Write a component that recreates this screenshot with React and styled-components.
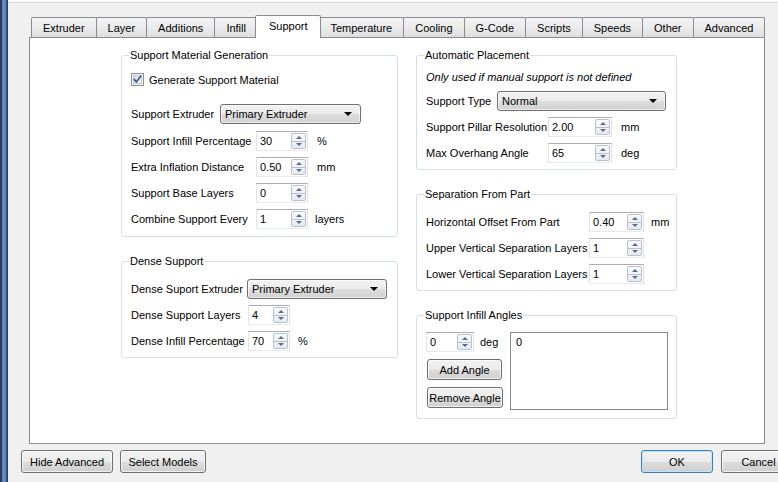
import styled, { createGlobalStyle } from 'styled-components';

const GlobalStyle = createGlobalStyle`
  html, body { margin: 0; padding: 0; background: #f0f0f0; }
  body {
    font-family: "Liberation Sans", Arial, sans-serif;
    font-size: 11px;
    color: #000;
  }
  #root { width: 778px; height: 482px; overflow: hidden; }
`;

const Window = styled.div`
  display: flex;
  width: 778px;
  height: 482px;
  background: #f0f0f0;
  overflow: hidden;
`;

const FrameEdge = styled.div`
  flex: none;
  width: 8px;
  background: linear-gradient(to right, #2a3d5e 0, #2a3d5e 2px, #5a7fbd 2px, #6d91cb 5px, #3f63a0 6px, #1d3357 8px);
`;

const Dialog = styled.div`
  flex: none;
  width: 788px;
  box-sizing: border-box;
  padding: 15px 0 0 13px;
  display: flex;
  flex-direction: column;
  background: linear-gradient(#fbfbfb 0, #fbfbfb 2px, #dadada 2px, #dadada 3px, #f0f0f0 3px);
`;

const TabWidget = styled.div`
  margin-left: 8px;
  width: 736px;
  display: flex;
  flex-direction: column;
`;

const TabBar = styled.div`
  position: relative;
  z-index: 1;
  display: flex;
  align-items: flex-end;
  height: 23px;
  padding-left: 2px;
  margin-bottom: -1px;
`;

const Tab = styled.div`
  position: relative;
  z-index: ${p => (p.$active ? 2 : 1)};
  box-sizing: border-box;
  height: ${p => (p.$active ? 23 : 20)}px;
  display: flex;
  align-items: center;
  padding: ${p => (p.$active ? '0 13px 2px' : '0 11px')};
  margin: ${p => (p.$active ? '0 -3px 0 -2px' : '0 -1px 1px 0')};
  border: 1px solid #898c95;
  border-bottom: none;
  border-radius: 2px 2px 0 0;
  background: ${p => (p.$active ? '#fff' : 'linear-gradient(#f3f3f3, #ebebeb 50%, #dedede 100%)')};
  white-space: nowrap;
`;

const Pane = styled.div`
  box-sizing: border-box;
  height: 407px;
  border: 1px solid #898c95;
  background: #fff;
  display: flex;
  align-items: flex-start;
  gap: 18px;
  padding: 11px 0 0 91px;
`;

const Column = styled.div`
  display: flex;
  flex-direction: column;
  gap: 18px;
`;

const Group = styled.fieldset`
  margin: 0;
  min-inline-size: 0;
  width: ${p => p.$w}px;
  box-sizing: border-box;
  border: 1px solid #d5dfe5;
  border-radius: 3px;
  padding: 0 8px ${p => p.$pb}px 9px;
`;

const GroupTitle = styled.legend`
  padding: 0 1px;
  margin-left: -2px;
  line-height: 13px;
`;

const GroupBody = styled.div`
  display: flex;
  flex-direction: column;
  gap: 6px;
  padding-top: ${p => p.$pt}px;
`;

const Row = styled.div`
  display: flex;
  align-items: center;
  height: ${p => p.$h || 20}px;
  margin-bottom: ${p => p.$mb || 0}px;
`;

const Label = styled.span`
  flex: none;
  width: ${p => p.$w}px;
  white-space: nowrap;
`;

const Unit = styled.span`
  margin-left: ${p => p.$ml || 9}px;
`;

const Note = styled.div`
  font-style: italic;
  line-height: 15px;
  white-space: nowrap;
`;

const CheckLabel = styled.span`
  margin-left: 5px;
`;

const SpinBox = styled.div`
  flex: none;
  box-sizing: border-box;
  width: ${p => p.$w}px;
  height: 20px;
  display: flex;
  border: 1px solid;
  border-color: #abadb3 #dbdfe6 #e3e9ef #e2e3ea;
  background: #fff;
`;

const SpinValue = styled.span`
  flex: 1;
  display: flex;
  align-items: center;
  padding-left: 3px;
`;

const SpinButtons = styled.div`
  width: 13px;
  margin: 1px 1px 1px 0;
  display: flex;
  flex-direction: column;
  border: 1px solid #b7c1cf;
  border-radius: 2px;
  background: linear-gradient(#f8fafc, #e6ebf1);
`;

const SpinButton = styled.div`
  flex: 1;
  display: flex;
  align-items: center;
  justify-content: center;
  & + & { border-top: 1px solid #b7c1cf; }
`;

const Arrow = styled.span`
  width: 0;
  height: 0;
  border-left: 3px solid transparent;
  border-right: 3px solid transparent;
  ${p => (p.$up ? 'border-bottom: 3px solid #5a6c8e;' : 'border-top: 3px solid #5a6c8e;')}
`;

const Combo = styled.div`
  flex: none;
  box-sizing: border-box;
  width: ${p => p.$w}px;
  height: 20px;
  display: flex;
  align-items: center;
  justify-content: space-between;
  padding: 0 8px 0 4px;
  border: 1px solid #707070;
  border-radius: 3px;
  background: linear-gradient(#f2f2f2 0%, #ebebeb 50%, #dddddd 51%, #d2d2d2 100%);
  box-shadow: inset 0 0 0 1px rgba(255, 255, 255, 0.6);
`;

const ComboArrow = styled.span`
  width: 0;
  height: 0;
  border-left: 4px solid transparent;
  border-right: 4px solid transparent;
  border-top: 4px solid #000;
`;

const AnglesLayout = styled.div`
  display: flex;
  gap: 7px;
  padding-top: ${p => p.$pt}px;
`;

const AnglesControls = styled.div`
  width: 77px;
  display: flex;
  flex-direction: column;
  gap: 7px;
`;

const ListBox = styled.div`
  box-sizing: border-box;
  width: 158px;
  height: 78px;
  border: 1px solid #828790;
  background: #fff;
  padding: 3px 5px;
`;

const PushButton = styled.button`
  flex: none;
  box-sizing: border-box;
  width: ${p => p.$w}px;
  height: ${p => p.$h || 23}px;
  margin-left: ${p => p.$ml || 0}px;
  padding: 0;
  font: inherit;
  color: #000;
  white-space: nowrap;
  border: 1px solid ${p => (p.$default ? '#3c7fb1' : '#707070')};
  border-radius: 3px;
  background: linear-gradient(#f2f2f2 0%, #ebebeb 50%, #dddddd 51%, #cfcfcf 100%);
  box-shadow: inset 0 0 0 1px ${p => (p.$default ? '#bfe4f7' : 'rgba(255, 255, 255, 0.7)')};
`;

const ButtonRow = styled.div`
  display: flex;
  align-items: center;
  margin-top: 6px;
  gap: 7px;
`;

const Spacer = styled.div`
  flex: 1;
`;

const Spin = ({ value, w }) => (
  <SpinBox $w={w}>
    <SpinValue>{value}</SpinValue>
    <SpinButtons>
      <SpinButton><Arrow $up /></SpinButton>
      <SpinButton><Arrow /></SpinButton>
    </SpinButtons>
  </SpinBox>
);

const CheckBox = () => (
  <svg width="13" height="13" viewBox="0 0 13 13">
    <defs>
      <linearGradient id="cbg" x1="0" y1="0" x2="1" y2="1">
        <stop offset="0" stopColor="#d8d8d8" />
        <stop offset="1" stopColor="#fbfbfb" />
      </linearGradient>
    </defs>
    <rect x="0.5" y="0.5" width="12" height="12" fill="#f4f4f4" stroke="#8e8f8f" />
    <rect x="2.5" y="2.5" width="8" height="8" fill="url(#cbg)" stroke="#c9c9c9" />
    <path d="M3.2 6.4 L5.4 9 L9.8 3.1" fill="none" stroke="#3d5a96" strokeWidth="1.7" strokeLinecap="round" strokeLinejoin="round" />
  </svg>
);

const tabs = ['Extruder', 'Layer', 'Additions', 'Infill', 'Support', 'Temperature', 'Cooling', 'G-Code', 'Scripts', 'Speeds', 'Other', 'Advanced'];

export default function App() {
  return (
    <Window>
      <GlobalStyle />
      <FrameEdge />
      <Dialog>
        <TabWidget>
          <TabBar>
            {tabs.map(t => (
              <Tab key={t} $active={t === 'Support'}>{t}</Tab>
            ))}
          </TabBar>
          <Pane>
            <Column>
              <Group $w={277} $pb={7}>
                <GroupTitle>Support Material Generation</GroupTitle>
                <GroupBody $pt={11}>
                  <Row $h={13} $mb={12}>
                    <CheckBox />
                    <CheckLabel>Generate Support Material</CheckLabel>
                  </Row>
                  <Row $mb={1}>
                    <Label $w={89}>Support Extruder</Label>
                    <Combo $w={141}>Primary Extruder<ComboArrow /></Combo>
                  </Row>
                  <Row>
                    <Label $w={125}>Support Infill Percentage</Label>
                    <Spin value="30" w={52} />
                    <Unit>%</Unit>
                  </Row>
                  <Row>
                    <Label $w={125}>Extra Inflation Distance</Label>
                    <Spin value="0.50" w={52} />
                    <Unit>mm</Unit>
                  </Row>
                  <Row>
                    <Label $w={125}>Support Base Layers</Label>
                    <Spin value="0" w={52} />
                  </Row>
                  <Row>
                    <Label $w={125}>Combine Support Every</Label>
                    <Spin value="1" w={52} />
                    <Unit $ml={7}>layers</Unit>
                  </Row>
                </GroupBody>
              </Group>
              <Group $w={277} $pb={6}>
                <GroupTitle>Dense Support</GroupTitle>
                <GroupBody $pt={11}>
                  <Row>
                    <Label $w={116}>Dense Suport Extruder</Label>
                    <Combo $w={140}>Primary Extruder<ComboArrow /></Combo>
                  </Row>
                  <Row>
                    <Label $w={117}>Dense Support Layers</Label>
                    <Spin value="4" w={42} />
                  </Row>
                  <Row>
                    <Label $w={117}>Dense Infill Percentage</Label>
                    <Spin value="70" w={42} />
                    <Unit $ml={8}>%</Unit>
                  </Row>
                </GroupBody>
              </Group>
            </Column>
            <Column>
              <Group $w={261} $pb={6}>
                <GroupTitle>Automatic Placement</GroupTitle>
                <GroupBody $pt={8}>
                  <Note>Only used if manual support is not defined</Note>
                  <Row>
                    <Label $w={71}>Support Type</Label>
                    <Combo $w={169}>Normal<ComboArrow /></Combo>
                  </Row>
                  <Row>
                    <Label $w={122}>Support Pillar Resolution</Label>
                    <Spin value="2.00" w={64} />
                    <Unit>mm</Unit>
                  </Row>
                  <Row>
                    <Label $w={122}>Max Overhang Angle</Label>
                    <Spin value="65" w={64} />
                    <Unit>deg</Unit>
                  </Row>
                </GroupBody>
              </Group>
              <Group $w={261} $pb={6}>
                <GroupTitle>Separation From Part</GroupTitle>
                <GroupBody $pt={11}>
                  <Row>
                    <Label $w={163}>Horizontal Offset From Part</Label>
                    <Spin value="0.40" w={55} />
                    <Unit $ml={7}>mm</Unit>
                  </Row>
                  <Row>
                    <Label $w={163}>Upper Vertical Separation Layers</Label>
                    <Spin value="1" w={55} />
                  </Row>
                  <Row>
                    <Label $w={163}>Lower Vertical Separation Layers</Label>
                    <Spin value="1" w={55} />
                  </Row>
                </GroupBody>
              </Group>
              <Group $w={261} $pb={8}>
                <GroupTitle>Support Infill Angles</GroupTitle>
                <AnglesLayout $pt={10}>
                  <AnglesControls>
                    <Row>
                      <Spin value="0" w={48} />
                      <Unit $ml={6}>deg</Unit>
                    </Row>
                    <PushButton $w={75} $h={21} $ml={1}>Add Angle</PushButton>
                    <PushButton $w={76} $h={21} $ml={1}>Remove Angle</PushButton>
                  </AnglesControls>
                  <ListBox>0</ListBox>
                </AnglesLayout>
              </Group>
            </Column>
          </Pane>
        </TabWidget>
        <ButtonRow>
          <PushButton $w={92}>Hide Advanced</PushButton>
          <PushButton $w={86}>Select Models</PushButton>
          <Spacer />
          <PushButton $w={72} $default>OK</PushButton>
          <PushButton $w={75} $ml={1}>Cancel</PushButton>
        </ButtonRow>
      </Dialog>
    </Window>
  );
}
